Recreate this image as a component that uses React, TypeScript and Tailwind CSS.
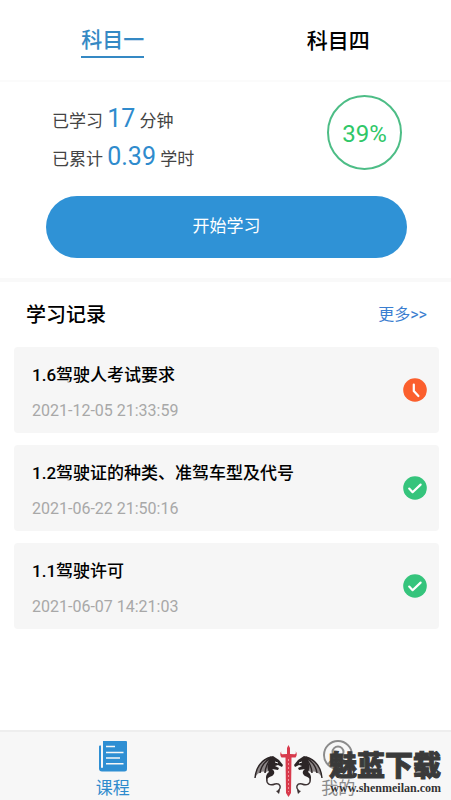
const records = [
  { title: '1.6驾驶人考试要求', time: '2021-12-05 21:33:59', done: false },
  { title: '1.2驾驶证的种类、准驾车型及代号', time: '2021-06-22 21:50:16', done: true },
  { title: '1.1驾驶许可', time: '2021-06-07 14:21:03', done: true },
]

function StatusIcon({ done }: { done: boolean }) {
  return (
    <svg viewBox="0 0 24 24" className="w-6 h-6 shrink-0" role="img" aria-label={done ? '已完成' : '学习中'}>
      <circle cx="12" cy="12" r="11.8" fill={done ? '#35c47c' : '#fb5f2d'} />
      <path
        d={done ? 'M6.2 12.6l3.4 3.600 8-7.600' : 'M10.800 6.600v6.400l4.600 5'}
        fill="none"
        stroke="#fff"
        strokeWidth="2.2"
        strokeLinecap="round"
        strokeLinejoin="round"
      />
    </svg>
  )
}

function BookIcon() {
  return (
    <svg viewBox="0 0 30 32" className="w-[30px] h-8" aria-hidden="true">
      <path d="M5 1h23q1 0 1 1v27q0 2.500-2.500 2.500H4Q1 31.500 1 28.500V6.500Q1 5.500 2 5.500h1V27q0 1 1 1t1-1V1z" fill="#2f8fd3" />
      <path d="M8 6.500h9M8 12.500h17.500M8 18h14M8 23.800h17.500" stroke="#f7f7f7" strokeWidth="1.4" />
    </svg>
  )
}

function UserIcon() {
  return (
    <svg viewBox="0 0 32 32" className="w-8 h-8" fill="none" stroke="#8b8b8b" strokeWidth="2" aria-hidden="true">
      <circle cx="16" cy="15" r="14" />
      <circle cx="16" cy="12" r="5.5" />
      <path d="M6 25c3-8 17-8 20 0" />
    </svg>
  )
}

function Dragon() {
  return (
    <>
      {/* wing membrane and its ribs */}
      <path d="M4 36C5 26 10 18 19 15l2-1 1 4-2 12c-2-1-4-1-6 1-1-2-3-2-5 0-2 0-4 2-5 5z" fill="#8d8788" />
      <path d="M4 36C5 26 10 18 20 15M9 31c1-6 5-12 11-15M14 31c0-5 3-11 6-14M20 30c-2-4-1-9 0-14" stroke="#2c2526" strokeWidth="1.4" fill="none" />
      {/* head and neck */}
      <path d="M19 15l3-1 6 4 4 5-1 2-4-2-3 1 4 2-1 2-6-1c3 2 3 5 0 7-3 1-6 3-5 6-2-4-1-8 2-10-2-3-2-8 1-11z" fill="#2c2526" />
      <path d="M24 20l3 1" stroke="#f7f7f7" strokeWidth="1" />
      {/* tail */}
      <path d="M16 37c-1 5 3 7 8 5 5-1 7 3 3 7" stroke="#3c3233" strokeWidth="1.4" fill="none" />
      <path d="M25 49l4-1-1 4z" fill="#3c3233" />
    </>
  )
}

function Emblem() {
  return (
    <svg viewBox="0 0 74 58" className="w-[74px] h-[58px] shrink-0" aria-hidden="true">
      <Dragon />
      <g transform="matrix(-1 0 0 1 75 0)">
        <Dragon />
      </g>
      <path d="M36 12V6l1.500-3L39 6v6l5 .3q1.500-1.300.5-3.300 2.500 3 0 6.500H40.500L40 51l-2.500 4L35 51l-.5-35.500H30.500q-2.500-3.500 0-6.500-1 2 .5 3.300z" fill="#d83a4c" />
      <path d="M37.500 17v33" stroke="#f0949d" strokeWidth="1" strokeDasharray="2 2" />
    </svg>
  )
}

export default function App() {
  return (
    <div className="relative min-h-screen flex flex-col overflow-hidden bg-white text-black font-[Roboto,'Noto_Sans_CJK_SC',sans-serif]">
      <nav className="grid grid-cols-2 justify-items-center items-start h-[82px] pt-6 border-b-2 border-[#fbfbfb]" aria-label="科目">
        <button className="h-[34px] border-b-2 border-[#3589c4] text-[21px] leading-8 font-medium text-[#3589c4]">科目一</button>
        <button className="h-[34px] text-[21px] leading-8 font-medium">科目四</button>
      </nav>

      <main className="flex-1">
        <section className="pt-[13px] pb-5 border-b-4 border-[#f9f9f9]">
          <div className="flex justify-between pl-[52px] pr-[49px]">
            <div className="pt-[5px] text-[17px] leading-[38px] text-[#444]">
              <p className="h-[38px]">
                已学习 <span className="text-[25px] text-[#2f8bcd]">17</span> 分钟
              </p>
              <p className="h-[38px]">
                已累计 <span className="text-[25px] text-[#2f8bcd]">0.39</span> 学时
              </p>
            </div>
            <div className="flex items-center justify-center w-[75px] h-[75px] pt-0.5 rounded-full border-2 border-[#4dbd86] text-2xl text-[#2fc768]">
              39%
            </div>
          </div>
          <div className="mt-5 pl-[46px] pr-11">
            <button className="w-full h-[62px] rounded-full bg-[#2f92d6] text-[17px] text-white">开始学习</button>
          </div>
        </section>

        <section className="pl-3.5 pr-3 pt-[17px]">
          <div className="flex items-center justify-between px-3 h-8">
            <h2 className="text-xl font-medium">学习记录</h2>
            <a href="#records" className="text-base text-[#3b7ed0]">
              更多&gt;&gt;
            </a>
          </div>
          <ul id="records" className="mt-4 flex flex-col gap-3">
            {records.map((record) => (
              <li key={record.title} className="flex items-center justify-between h-[86px] pl-[18px] pr-3 rounded bg-[#f6f6f6]">
                <div className="pt-1.5">
                  <h3 className="text-[17px] leading-8 font-medium">{record.title}</h3>
                  <p className="mt-1 text-base leading-8 text-[#a8a8a8]">{record.time}</p>
                </div>
                <StatusIcon done={record.done} />
              </li>
            ))}
          </ul>
        </section>
      </main>

      <footer className="grid grid-cols-2 h-[70px] border-t-2 border-[#eee] bg-[#f7f7f7] text-[17px] leading-6">
        <a href="#course" className="flex flex-col items-center pt-2 gap-1 text-[#2f8bcd]">
          <BookIcon />
          课程
        </a>
        <a href="#mine" className="flex flex-col items-center pt-2 gap-1 text-[#8b8b8b]">
          <UserIcon />
          我的
        </a>
      </footer>

      {/* Site mark, floats over the tab bar */}
      <div className="absolute right-2.5 bottom-0 flex items-end gap-1 pointer-events-none">
        <Emblem />
        <div className="flex flex-col items-end pb-1">
          <span className="font-['Noto_Sans_CJK_SC',sans-serif] text-[28px] leading-8 font-black text-[#3a3a3a] [-webkit-text-stroke:1px_#3a3a3a]">
            魅蓝下载
          </span>
          <span className="font-['Liberation_Serif',serif] text-[12px] leading-4 font-bold text-[#333] [text-shadow:0_0_2px_#fff]">
            www.shenmeilan.com
          </span>
        </div>
      </div>
    </div>
  )
}
